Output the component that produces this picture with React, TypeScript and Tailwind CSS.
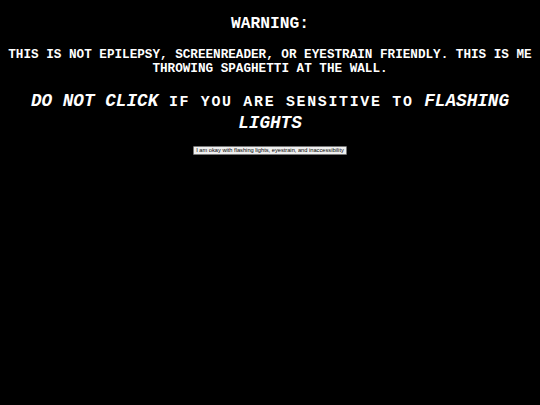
export default function App() {
  return (
    <div className="min-h-[405px] bg-black text-white font-['Courier_New','Nimbus_Mono_PS','FreeMono','Liberation_Mono',monospace] font-bold text-center">
      <div className="pt-[15px] text-[16.25px] leading-[18px]">WARNING:</div>
      <p className="mt-[14.5px] px-[2px] text-[12.65px] leading-[14px]">
        THIS IS NOT EPILEPSY, SCREENREADER, OR EYESTRAIN FRIENDLY. THIS IS ME THROWING SPAGHETTI AT THE WALL.
      </p>
      <p className="mt-[15px] px-[4px] text-[17.7px] leading-[21.5px]">
        <em>DO NOT CLICK</em>{" "}
        {/* small caps drawn as shrunken capitals that keep the full cell width */}
        <span className="text-[14.9px] tracking-[1.7px] uppercase">if you are sensitive to </span>
        <em>FLASHING LIGHTS</em>
      </p>
      <div className="mt-[11px] flex justify-center">
        <button className="h-[9px] px-[2px] bg-[#efefef] border border-[#767676] rounded-[1px] text-black font-normal font-['Liberation_Sans',sans-serif] text-[5.7px] leading-[7px]">
          I am okay with flashing lights, eyestrain, and inaccessibility
        </button>
      </div>
    </div>
  );
}
